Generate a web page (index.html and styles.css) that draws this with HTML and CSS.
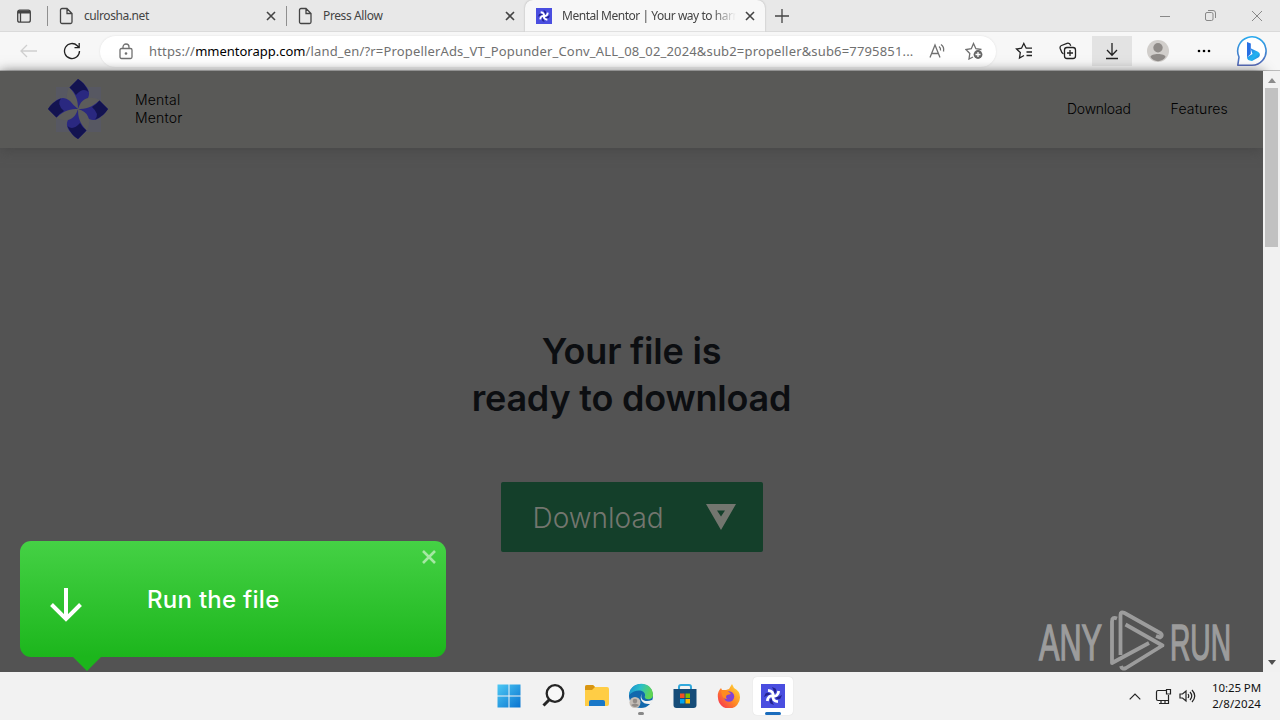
FILE: index.html
```html
<!DOCTYPE html>
<html lang="en">
<head>
    <meta charset="UTF-8">
    <meta name="viewport" content="width=device-width, initial-scale=1.0">
    <title>Mental Mentor | Your way to harmony</title>
    <link rel="stylesheet" href="styles.css">
</head>
<body>
    <svg class="defs" width="0" height="0">
        <symbol id="x" viewBox="0 0 10 10"><path d="M1 1l8 8M9 1L1 9"/></symbol>
        <symbol id="page" viewBox="0 0 14 18"><path d="M3 1.5h5l5 5v8.5a1.5 1.5 0 0 1-1.5 1.5h-8.500a1.500 1.500 0 0 1-1.500-1.500v-12a1.500 1.500 0 0 1 1.500-1.500zM8 1.500v5h5"/></symbol>
        <symbol id="wheel" viewBox="0 0 24 24">
            <rect width="24" height="24" fill="#4a4ee0"/>
            <g id="blades">
                <path d="M11 3L14.500 4.500Q16.500 7 13.500 10L12.500 6z" fill="#23238f"/>
                <path d="M12 12.500Q13 7 7 6.300" fill="none" stroke="#fff" stroke-width="2.800"/>
            </g>
            <use href="#blades" transform="rotate(90 12 12)"/>
            <use href="#blades" transform="rotate(180 12 12)"/>
            <use href="#blades" transform="rotate(270 12 12)"/>
        </symbol>
    </svg>

    <div class="tabs">
        <svg class="line tabmenu" width="16" height="16" viewBox="0 0 16 16"><rect x="1.700" y="2.200" width="12.600" height="12" rx="2"/><path d="M2 4h12" stroke-width="3"/><path d="M4.500 5v9"/></svg>
        <div class="tab tab1">
            <svg class="line" width="14" height="18"><use href="#page"/></svg>
            <span class="title t1">culrosha.net</span>
            <svg class="line close" width="10" height="10"><use href="#x"/></svg>
        </div>
        <div class="tab tab2">
            <svg class="line" width="14" height="18"><use href="#page"/></svg>
            <span class="title t2">Press Allow</span>
            <svg class="line close" width="10" height="10"><use href="#x"/></svg>
        </div>
        <div class="tab active">
            <svg width="16" height="16"><use href="#wheel"/></svg>
            <span class="title t3">Mental Mentor | Your way to harmony</span>
            <svg class="line close" width="10" height="10"><use href="#x"/></svg>
        </div>
        <svg class="line plus" width="14" height="14" viewBox="0 0 14 14"><path d="M7 0v14M0 7h14"/></svg>
        <div class="winbtns">
            <svg width="10" height="10" viewBox="0 0 10 10"><path d="M0 5.500h10"/></svg>
            <svg width="11" height="11" viewBox="0 0 11 11"><rect x=".5" y="2.500" width="7.500" height="8" rx="1.500"/><path d="M3 .5h5a2.500 2.500 0 0 1 2.500 2.500v5"/></svg>
            <svg width="12" height="12" viewBox="0 0 12 12"><path d="M1 1l10 10M11 1L1 11"/></svg>
        </div>
    </div>

    <div class="toolbar">
        <svg class="back" width="17" height="14" viewBox="0 0 17 14"><path d="M17 7H1M7 1L1 7l6 6"/></svg>
        <svg class="black reload" width="18" height="18" viewBox="0 0 18 18"><path d="M16.500 9a7.500 7.500 0 1 1-2.200-5.300L16 5.500M16.200 1v4.700h-4.700"/></svg>
        <div class="address">
            <svg class="grey lock" width="14" height="17" viewBox="0 0 14 17"><rect x="1" y="5.500" width="12" height="10" rx="1.500"/><path d="M4 5.500V4a3 3 0 0 1 6 0v1.500"/><circle cx="7" cy="10.500" r=".7"/></svg>
            <span class="url">https://<b>mmentorapp.com</b>/land_en/?r=PropellerAds_VT_Popunder_Conv_ALL_08_02_2024&amp;sub2=propeller&amp;sub6=7795851...</span>
            <svg class="grey read" width="17" height="16" viewBox="0 0 17 16"><path d="M1 14.500L6 2l5 12.500M2.700 10.500h6.600M10 3.500q2 1.500 1.500 4M12 1.500q3.500 2.500 2.500 7"/></svg>
            <svg class="grey fav" width="18" height="18" viewBox="0 0 18 18"><path d="M8 15l-4 2 .8-5.500-3.800-4 5.300-.8L8.500 1.500l2.400 5.200 5.600.8"/><circle cx="13" cy="12.500" r="4.400" fill="#666" stroke="none"/><path d="M13 10v5M10.500 12.500h5" stroke="#fff"/></svg>
        </div>
        <svg class="black star" width="18" height="18" viewBox="0 0 18 18"><path d="M9 13.500L4.500 16l.8-5.500L1.500 7l5-.8 2.300-4.700 2.400 4.700H17M11.500 10H17M11.500 13.500H17"/></svg>
        <svg class="black coll" width="18" height="18" viewBox="0 0 18 18"><path d="M4.500 12C2.500 11 2 9 1.200 6.500c-.4-1.500 0-2.500 1.300-3L8 1.300c2-.6 3 .2 3.800 2.500"/><rect x="5.500" y="5.500" width="11" height="11" rx="2.500"/><path d="M11 8v6M8 11h6"/></svg>
        <div class="dl"><svg class="black" width="14" height="18" viewBox="0 0 14 18"><path d="M7 1v12M2 8l5 5.200L12 8M1 16.500h12"/></svg></div>
        <svg class="avatar" width="22" height="22" viewBox="0 0 22 22"><circle cx="11" cy="11" r="11" fill="#d1cecb"/><circle cx="11" cy="7.700" r="4.700" fill="#8f8b88"/><path d="M3.500 17c0-4 15-4 15 0-3 5.500-12 5.500-15 0z" fill="#8f8b88"/></svg>
        <svg class="dots" width="14" height="4" viewBox="0 0 14 4"><circle cx="2" cy="2" r="1.300"/><circle cx="7" cy="2" r="1.300"/><circle cx="12" cy="2" r="1.300"/></svg>
        <svg class="bing" width="32" height="32" viewBox="0 0 32 32">
            <defs><linearGradient id="bg1" x1="0" x2="0" y1="0" y2="1"><stop offset="0" stop-color="#28a9ee"/><stop offset="1" stop-color="#5468b8"/></linearGradient>
            <linearGradient id="bg2" x1="0" x2="1" y1="0" y2="1"><stop offset="0" stop-color="#2c72e6"/><stop offset=".6" stop-color="#22b5f0"/><stop offset="1" stop-color="#2674dc"/></linearGradient></defs>
            <path d="M1.800 30.200L3 22A14.200 14.200 0 1 1 16 30.200z" fill="#fff" stroke="url(#bg1)" stroke-width="1.600" stroke-linejoin="round"/>
            <path d="M11 7l3.800 1.500v10.300l-3.800 3.700z" fill="#2870e4"/><path d="M11 22.300l5.500-3.200-2-5.800 7.500 3.500c2.500 1.500 2.500 4.500.3 5.700L16 26q-5-.3-5-3.700z" fill="url(#bg2)"/>
        </svg>
    </div>

    <div class="viewport">
        <div class="site">
            <div class="header">
                <svg class="logo" width="60" height="60" viewBox="0 0 60 60">
                    <rect x="8" y="8" width="45" height="45" fill="#575862"/>
                    <g id="petal">
                        <path d="M30 30C20 27 16 20 21 8C28 13 30 20 30 30z" fill="#5c5c5b"/>
                        <path d="M30 30C30 22 29 17 21.500 8.500L30 0Q35 3 38.500 8C42 13 42 17 38 22Q34 25 30 30z" fill="#2a2880"/>
                        <path d="M21.500 8.500L30 0Q37 4 40.500 13Q35 8 28 16Q26 12 21.500 8.500z" fill="#131350"/>
                    </g>
                    <use href="#petal" transform="rotate(90 30 30)"/>
                    <use href="#petal" transform="rotate(180 30 30)"/>
                    <use href="#petal" transform="rotate(270 30 30)"/>
                </svg>
                <div class="brand"><span class="b1">Mental</span><br><span class="b2">Mentor</span></div>
                <div class="nav"><span class="n1">Download</span><span class="n2">Features</span></div>
            </div>
            <h1><span class="h1a">Your file is</span><br><span class="h1b">ready to download</span></h1>
            <div class="button">
                <span class="btext">Download</span>
                <svg width="30" height="26" viewBox="0 0 30 26"><path d="M0 0h30L15 26zM11 6.500l4 6 4-6z" fill="#73766f" fill-rule="evenodd"/></svg>
            </div>
        </div>
        <div class="scrollbar">
            <svg width="8" height="5" viewBox="0 0 8 5"><path d="M0 5l4-5 4 5z" fill="#8b8b8b"/></svg>
            <div class="thumb"></div>
            <svg class="down" width="8" height="5" viewBox="0 0 8 5"><path d="M0 0h8L4 5z" fill="#505050"/></svg>
        </div>

        <div class="popup">
            <svg class="arrow" width="32" height="34" viewBox="0 0 32 34"><path d="M16 0v31M1.500 16.500L16 31l14.500-14.500" fill="none" stroke="#fff" stroke-width="4"/></svg>
            <span class="run">Run the file</span>
            <svg class="pclose" width="14" height="14" viewBox="0 0 14 14"><path d="M1 1l12 12M13 1L1 13" stroke="#a5e8a3" stroke-width="2.600"/></svg>
        </div>

        <svg class="watermark" width="204" height="64" viewBox="0 0 204 64">
            <g fill="#9c9c9c" stroke="#9c9c9c" stroke-width="1.500">
                <text x="1" y="50.500" font-size="50" textLength="63" lengthAdjust="spacingAndGlyphs">ANY</text>
                <text x="132" y="50.500" font-size="50" textLength="61" lengthAdjust="spacingAndGlyphs">RUN</text>
            </g>
            <g fill="none" stroke="#9c9c9c" stroke-width="3.800" stroke-linejoin="round">
                <path d="M79 9.500q-5-2-5 3V54L111 34"/>
                <path d="M82.500 46V6q0-4 4-2L123 24.500q2 2-1 4l-4-1.500"/>
                <path d="M87.500 15.500L124.500 36.500L88 59q-4 2-5-2"/>
            </g>
        </svg>
    </div>

    <div class="taskbar">
        <div class="apps">
            <div class="app"><svg width="24" height="24" viewBox="0 0 24 24"><defs><linearGradient id="win" gradientUnits="userSpaceOnUse" x1="0" y1="0" x2="24" y2="24"><stop offset="0" stop-color="#4fcbf5"/><stop offset="1" stop-color="#0871cf"/></linearGradient></defs><path d="M.5.500h11v11h-11zM12.500.500h11v11h-11zM.5 12.500h11v11h-11zM12.500 12.500h11v11h-11z" fill="url(#win)"/></svg></div>
            <div class="app"><svg width="24" height="24" viewBox="0 0 24 24"><circle cx="14" cy="9.500" r="8.300" fill="#f8f8f8" stroke="#252525" stroke-width="2.300"/><path d="M8 16L2.500 21.500" stroke="#252525" stroke-width="3"/></svg></div>
            <div class="app"><svg width="26" height="24" viewBox="0 0 26 24"><path d="M1 3q0-2 2-2h6l2 2h12q2 0 2 2v15q0 2-2 2H1z" fill="#ffcd45"/><path d="M1 6V3q0-2 2-2h6l2 2-3 3z" fill="#d89512"/><path d="M5 22v-4q0-2 2-2h12q2 0 2 2v4z" fill="#1978c8"/></svg></div>
            <div class="app"><svg width="26" height="26" viewBox="0 0 26 26"><defs><linearGradient id="edge" x2="1" y2=".3"><stop offset="0" stop-color="#1689d2"/><stop offset=".5" stop-color="#2bbfc8"/><stop offset="1" stop-color="#60d552"/></linearGradient></defs><circle cx="13" cy="13" r="12" fill="#1268ad"/><path d="M1 12C2-3 25-3 25 12c0 6-10 5-8 1 1-6-9-8-16-1z" fill="url(#edge)"/><path d="M14 10.500c-3 7 4 9 10 6.500l1 1-2.500 3c-8 1-12-5-8.500-10.500z" fill="#f2f2f2"/><circle cx="7" cy="19.500" r="5.500" fill="#c4bdb6"/><circle cx="7" cy="18" r="2.300" fill="#918b87"/><path d="M3 22q4-3 8 0-4 4-8 0z" fill="#918b87"/></svg><i class="dot"></i></div>
            <div class="app"><svg width="24" height="25" viewBox="0 0 24 25"><path d="M6 6V3q0-2 2-2h8q2 0 2 2v3" fill="none" stroke="#33a9dc" stroke-width="2"/><path d="M.5 5h23v16q0 3-3 3h-17q-3 0-3-3z" fill="#164c78"/><path d="M7 9.500h4.500V14H7z" fill="#f05022"/><path d="M12.500 9.500H17V14h-4.500z" fill="#7fba00"/><path d="M7 15h4.500v4.500H7z" fill="#00a4ef"/><path d="M12.500 15H17v4.500h-4.500z" fill="#ffb900"/></svg></div>
            <div class="app"><svg width="24" height="24" viewBox="0 0 24 24"><defs><linearGradient id="ff" x1="1" x2="0" y2="1"><stop offset="0" stop-color="#ffe63c"/><stop offset=".5" stop-color="#ff8a24"/><stop offset="1" stop-color="#f5255a"/></linearGradient></defs><path d="M4 4l1 2 4 0 3-1 3-5 2 4q6 3 6 9A11 11 0 0 1 1 14Q0 8 4 4z" fill="url(#ff)"/><circle cx="12" cy="12.500" r="5.200" fill="#8043d4"/><path d="M4 7q5-2 8 1l2 2-4 1q-2 2 0 4-4 0-5-4z" fill="#ff8b21"/></svg></div>
            <div class="app current"><svg width="24" height="24"><use href="#wheel"/></svg><i class="dot blue"></i></div>
        </div>
        <div class="tray">
            <svg width="12" height="7" viewBox="0 0 12 7"><path d="M.7 6.300L6 1l5.300 5.300"/></svg>
            <svg class="net" width="17" height="17" viewBox="0 0 17 17"><path d="M11 2.500H3q-1.500 0-1.500 1.500v7q0 1.500 1.500 1.500h10M6 12.500v3M10 12.500v3M4 15.500h9.500V7M11.500 1.500h4V6h-4z"/></svg>
            <svg class="vol" width="17" height="14" viewBox="0 0 17 14"><path d="M1 5v4h2.500L7 12V2L3.500 5zM9 5q1.500 2 0 4M11 3q3.500 4 0 8M13 1q5.500 6 0 12"/></svg>
            <div class="clock"><span class="c1">10:25 PM</span><br><span class="c2">2/8/2024</span></div>
        </div>
    </div>
</body>
</html>
```
FILE: styles.css
```css
* {
    box-sizing: border-box;
}
body {
    margin: 0;
    width: 1280px;
    height: 720px;
    overflow: hidden;
    display: flex;
    flex-direction: column;
    font-family: "Noto Sans", sans-serif;
}
svg {
    display: block;
    flex: none;
}
span {
    white-space: nowrap;
}
.defs {
    position: absolute;
}
.line {
    fill: none;
    stroke: #444;
    stroke-width: 1.3;
}
.black, .grey, .back {
    fill: none;
    stroke: #222;
    stroke-width: 1.3;
}
.grey {
    stroke: #707070;
}
.back {
    stroke: #cfcfcf;
}

/* tabs */
.tabs {
    height: 32px;
    flex: none;
    display: flex;
    align-items: center;
    background: #e8e8e8;
    border-bottom: 1px solid #dadada;
}
.tabmenu {
    margin: 0 15px 0 16px;
}
.tab {
    display: flex;
    align-items: center;
    height: 20px;
    border-left: 1px solid #8f8f8f;
    padding-left: 11px;
    font-size: 12px;
    letter-spacing: -0.38px;
    color: #444;
    width: 239px;
    flex: none;
}
.title {
    margin-left: 11px;
}
.close {
    margin-left: auto;
    margin-right: 10px;
    stroke-width: 1.6;
}
.tab.active {
    width: 240px;
    height: 32px;
    border: 0;
    background: #f7f7f7;
    border-radius: 8px 8px 0 0;
    box-shadow: 0 0 2px #aaa;
    clip-path: inset(-2px -2px 0 -2px);
}
.t3 {
    margin-left: 10px;
    width: 174px;
    overflow: hidden;
    letter-spacing: -0.47px;
    -webkit-mask-image: linear-gradient(90deg, #000 86%, transparent);
    mask-image: linear-gradient(90deg, #000 86%, transparent);
}
.t1 {
    letter-spacing: -0.42px;
}
.plus {
    margin-left: 10px;
}
.winbtns {
    margin-left: auto;
    margin-right: 17px;
    display: flex;
    align-items: center;
    gap: 35px;
    fill: none;
    stroke: #888;
}

/* toolbar */
.toolbar {
    height: 39px;
    flex: none;
    display: flex;
    align-items: center;
    background: #f7f7f7;
    border-bottom: 1px solid #bcbcbc;
}
.back {
    margin-left: 20px;
}
.reload {
    margin-left: 26px;
}
.address {
    width: 896px;
    height: 31px;
    margin-left: 19px;
    padding-left: 19px;
    border-radius: 16px;
    background: #fff;
    box-shadow: 0 0 2px #ddd;
    display: flex;
    align-items: center;
}
.url {
    margin-left: 16px;
    width: 767px;
    font-size: 13px;
    letter-spacing: 0.165px;
    color: #707070;
}
.url b {
    font-weight: normal;
    letter-spacing: 0;
    color: #000;
}
.read {
    margin-left: 13px;
}
.fav {
    margin-left: 19px;
}
.star {
    margin-left: 19px;
}
.coll {
    margin-left: 26px;
}
.dl {
    width: 40px;
    height: 30px;
    margin-left: 15px;
    background: #e3e3e3;
    display: flex;
    align-items: center;
    justify-content: center;
}
.avatar {
    margin-left: 15px;
}
.dots {
    margin-left: 28px;
}
.bing {
    margin-left: 25px;
}

/* page */
.viewport {
    position: relative;
    height: 601px;
    flex: none;
    display: flex;
}
.site {
    width: 1263px;
    background: #535353;
    font-family: Inter, sans-serif;
    display: flex;
    flex-direction: column;
    align-items: center;
}
.header {
    width: 100%;
    height: 77px;
    display: flex;
    align-items: center;
    padding: 0 35px 2px 48px;
    background: #595957;
    box-shadow: 0 2px 12px #474747;
    font-size: 14px;
    font-weight: 300;
    color: #000;
}
.brand {
    margin-left: 27px;
    line-height: 18px;
}
.b1, .b2 {
    letter-spacing: 0.2px;
}
.nav {
    margin-left: auto;
    display: flex;
    gap: 40px;
}
.n1 {
    letter-spacing: -0.25px;
}
.n2 {
    letter-spacing: 0.15px;
}
h1 {
    margin: 180px 0 0;
    text-align: center;
    font-size: 36px;
    line-height: 47px;
    font-weight: 600;
    letter-spacing: -0.2px;
    color: #0c0e11;
}
.button {
    width: 262px;
    height: 70px;
    margin-top: 60px;
    padding: 0 27px 0 32px;
    display: flex;
    align-items: center;
    justify-content: space-between;
    background: #143f2a;
    border-radius: 2px;
    color: #73766f;
    font-size: 28px;
    font-weight: 300;
}
.btext {
    padding-top: 2px;
}
.scrollbar {
    width: 17px;
    background: #f1f1f1;
    display: flex;
    flex-direction: column;
    align-items: center;
    padding: 7px 0;
}
.thumb {
    width: 13px;
    height: 159px;
    margin-top: 5px;
    background: #c1c1c1;
}
.down {
    margin-top: auto;
}

/* popup over the page */
.popup {
    position: absolute;
    left: 20px;
    top: 470px;
    width: 426px;
    height: 116px;
    padding-left: 30px;
    display: flex;
    align-items: center;
    border-radius: 11px;
    background: linear-gradient(#45d145, #1cb61c);
    font-family: Inter, sans-serif;
    color: #fff;
}
.popup::after {
    content: "";
    position: absolute;
    left: 52px;
    top: 115px;
    border: 15px solid transparent;
    border-top-color: #1cb61c;
    border-bottom: 0;
}
.arrow {
    margin-top: 12px;
}
.run {
    margin-left: 65px;
    font-size: 24px;
    font-weight: 500;
    letter-spacing: 0.27px;
}
.pclose {
    position: absolute;
    right: 10px;
    top: 9px;
}
.watermark {
    position: absolute;
    left: 1038px;
    top: 538px;
    overflow: visible;
    font-family: "Liberation Sans", sans-serif;
}

/* taskbar */
.taskbar {
    height: 48px;
    flex: none;
    position: relative;
    display: flex;
    justify-content: space-between;
    padding: 0 19px 0 489px;
    background: #f2f2f2;
}
.apps {
    display: flex;
    gap: 4px;
    padding-top: 5px;
}
.app {
    position: relative;
    width: 40px;
    height: 38px;
    display: flex;
    align-items: center;
    justify-content: center;
}
.current {
    background: #fff;
    border-radius: 4px;
    box-shadow: 0 0 1px #ccc;
}
.dot {
    position: absolute;
    left: 17px;
    top: 35px;
    width: 6px;
    height: 3px;
    border-radius: 2px;
    background: #888;
}
.blue {
    left: 12px;
    width: 16px;
    background: #1a6cbd;
}
.tray {
    display: flex;
    align-items: center;
    fill: none;
    stroke: #222;
    stroke-width: 1.2;
}
.net {
    margin-left: 14px;
}
.vol {
    margin-left: 7px;
}
.clock {
    width: 65px;
    text-align: right;
    font-size: 11.5px;
    line-height: 16px;
    color: #111;
}
.c1 {
    letter-spacing: -0.1px;
}
.c2 {
    letter-spacing: 0.1px;
}
```
